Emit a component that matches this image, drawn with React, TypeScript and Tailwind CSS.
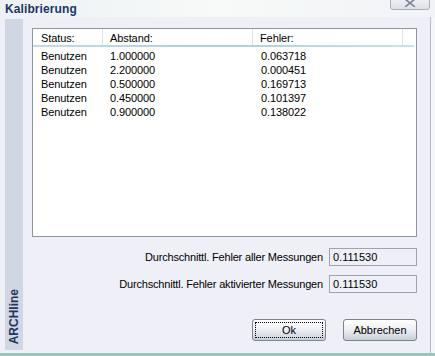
import React from 'react';

// Messwerte der Kalibrierung
const rows = [
  { status: 'Benutzen', abstand: '1.000000', fehler: '0.063718' },
  { status: 'Benutzen', abstand: '2.200000', fehler: '0.000451' },
  { status: 'Benutzen', abstand: '0.500000', fehler: '0.169713' },
  { status: 'Benutzen', abstand: '0.450000', fehler: '0.101397' },
  { status: 'Benutzen', abstand: '0.900000', fehler: '0.138022' },
];

const font = { fontFamily: '"Liberation Sans", Arial, sans-serif' };

function XpButton({ label, focused }: { label: string; focused?: boolean }) {
  return (
    <button
      className="h-[22px] w-[74px] rounded-[3px] border border-[#7a8296] bg-gradient-to-b from-white via-[#eceef2] to-[#c9ced8] p-[2px] text-[11px] text-black"
      style={font}
    >
      <span
        className={`flex h-full w-full items-center justify-center ${
          focused ? 'border border-dotted border-black' : ''
        }`}
      >
        {label}
      </span>
    </button>
  );
}

export default function App() {
  return (
    <div className="relative h-[356px] w-[435px] overflow-hidden bg-[#f5f6f9]" style={font}>
      {/* Titelleiste */}
      <div className="flex h-[17px] items-center bg-gradient-to-r from-[#eef1f5] via-[#f7faf8] to-[#f1f3f7] pl-[5px]">
        <span className="text-[12px] font-bold leading-none tracking-[0.1px] text-[#1d3564]">Kalibrierung</span>
      </div>
      <div className="absolute left-[390px] top-[-8px] flex h-[18px] w-[40px] items-end justify-center rounded-[3px] border border-[#a9b0bc] bg-gradient-to-b from-[#f8f9fb] to-[#dde1e8] pb-[2px]">
        <svg width="12" height="8" viewBox="0 0 12 8">
          <path d="M1 0 L11 8 M11 0 L1 8" stroke="#7a818c" strokeWidth="1.6" fill="none" />
        </svg>
      </div>

      {/* Fensterinhalt */}
      <div className="flex h-[336px] w-[431px] border-r border-[#b8bcc6] bg-[#eff0f7]">
        {/* Seitenleiste */}
        <div className="ml-[5px] mt-[2px] flex h-[331px] w-[18px] flex-col justify-end bg-[#d0d7e3] pb-[6px]">
          <span
            className="rotate-180 self-center text-[12px] font-bold leading-none text-[#1f3562]"
            style={{ writingMode: 'vertical-rl' }}
          >
            ARCHline
          </span>
        </div>

        <div className="ml-[9px] flex w-[386px] flex-col pt-[11px]">
          {/* Liste */}
          <div className="h-[209px] w-[385px] border border-[#8d94a4] bg-white text-[11px] tracking-[-0.1px] text-black">
            <div className="relative flex h-[18px] items-center">
              <div className="flex h-full w-[70px] items-center border-r border-[#dfe2e6] pl-[8px]">Status:</div>
              <div className="flex h-full w-[150px] items-center border-r border-[#dfe2e6] pl-[7px]">Abstand:</div>
              <div className="flex h-full w-[150px] items-center border-r border-[#dfe2e6] pl-[7px]">Fehler:</div>
              <div className="absolute bottom-0 left-0 right-[2px] h-[2px] bg-gradient-to-r from-[#bddcec] via-[#a9d0e6] to-[#c6e2f0]" />
            </div>
            <div className="pt-[2px]">
              {rows.map((r, i) => (
                <div key={i} className="flex h-[14px] items-center leading-none">
                  <div className="w-[70px] pl-[8px]">{r.status}</div>
                  <div className="w-[150px] pl-[7px]">{r.abstand}</div>
                  <div className="w-[150px] pl-[8px]">{r.fehler}</div>
                </div>
              ))}
            </div>
          </div>

          {/* Durchschnittswerte */}
          <div className="mt-[11px] flex flex-col gap-[9px] text-[11px] text-black">
            <div className="flex items-center justify-end gap-[6px] pr-[1px]">
              <span className="tracking-[-0.18px]">Durchschnittl. Fehler aller Messungen</span>
              <div className="flex h-[18px] w-[88px] items-center border border-[#9ea3ad] pl-[3px]">0.111530</div>
            </div>
            <div className="flex items-center justify-end gap-[6px] pr-[1px]">
              <span className="tracking-[-0.18px]">Durchschnittl. Fehler aktivierter Messungen</span>
              <div className="flex h-[18px] w-[88px] items-center border border-[#9ea3ad] pl-[3px]">0.111530</div>
            </div>
          </div>

          {/* Schaltflächen */}
          <div className="mt-[26px] flex justify-end gap-[17px] pr-[1px]">
            <XpButton label="Ok" focused />
            <XpButton label="Abbrechen" />
          </div>
        </div>
      </div>
      <div className="h-[3px] w-full bg-[#97c6bc]" />
    </div>
  );
}
